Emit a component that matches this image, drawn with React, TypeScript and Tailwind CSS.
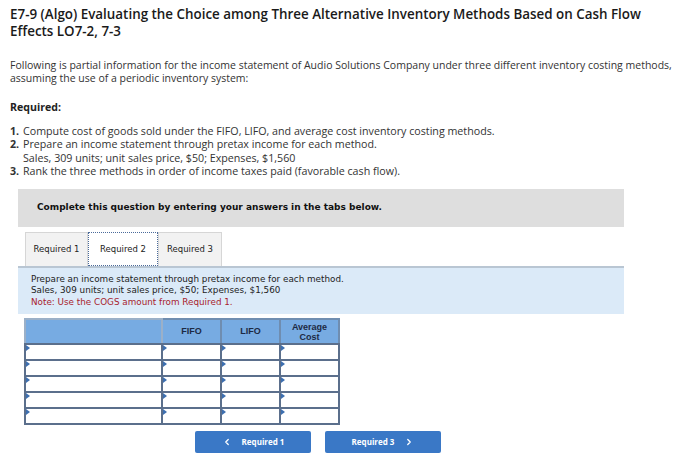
import React from 'react';
import { ChevronLeft, ChevronRight } from 'lucide-react';

const sans = { fontFamily: '"Open Sans", "Lato", sans-serif' };

const rows = [0, 1, 2, 3, 4];

const Cell: React.FC<{ className?: string }> = ({ className }) => (
    <td className={`relative border-2 border-[#5b6f8c] bg-white p-0 h-[16px] ${className ?? ''}`}>
        <span className="absolute left-0 top-0 w-0 h-0 border-t-[3px] border-b-[3px] border-l-[4px] border-t-transparent border-b-transparent border-l-[#3d6fb0]" />
    </td>
);

export default function App() {
    return (
        <div className="w-[700px] h-[460px] bg-white text-[#222] overflow-hidden" style={sans}>
            {/* Heading */}
            <div className="px-[10px] pt-[6px]">
                <h1 className="w-[650px] text-[13.4px] leading-[17px] font-semibold text-[#1a1a1a]">
                    E7-9 (Algo) Evaluating the Choice among Three Alternative Inventory Methods Based on Cash Flow Effects LO7-2, 7-3
                </h1>
                <p className="mt-[19px] text-[10.5px] leading-[13px] text-[#333]">
                    Following is partial information for the income statement of Audio Solutions Company under three different inventory costing methods, assuming the use of a periodic inventory system:
                </p>
                <div className="mt-[15px] text-[10.6px] font-bold text-[#222]">Required:</div>
                <ol className="mt-[9px] text-[10.7px] leading-[13.5px] text-[#333]">
                    <li className="flex"><span className="w-[13px] font-bold">1.</span><span>Compute cost of goods sold under the FIFO, LIFO, and average cost inventory costing methods.</span></li>
                    <li className="flex"><span className="w-[13px] font-bold">2.</span><span>Prepare an income statement through pretax income for each method.<br />Sales, 309 units; unit sales price, $50; Expenses, $1,560</span></li>
                    <li className="flex"><span className="w-[13px] font-bold">3.</span><span>Rank the three methods in order of income taxes paid (favorable cash flow).</span></li>
                </ol>
            </div>

            {/* Question box */}
            <div className="ml-[18px] w-[606px] mt-[10px]" style={{ fontFamily: '"DejaVu Sans", Verdana, sans-serif' }}>
                <div className="bg-[#dedede] h-[38px] flex items-center pl-[19px] text-[9px] font-bold text-[#111]">
                    Complete this question by entering your answers in the tabs below.
                </div>

                <div className="flex pl-[7px] mt-[5px] text-[8.5px] text-[#222]">
                    <div className="w-[63px] h-[34px] flex items-center justify-center bg-[#f2f2f2] border border-[#d6d6d6] border-b-0">Required 1</div>
                    <div className="w-[70px] h-[34px] flex items-center justify-center bg-white border border-dotted border-[#4a6a9a]">Required 2</div>
                    <div className="w-[64px] h-[34px] flex items-center justify-center bg-[#f2f2f2] border border-[#d6d6d6] border-b-0">Required 3</div>
                </div>

                <div className="bg-[#dbeaf8] border-t-2 border-[#b9c6d3] pl-[13px] pt-[6px] pb-[6px] text-[8.8px] leading-[11.5px] text-[#222]">
                    <div>Prepare an income statement through pretax income for each method.</div>
                    <div>Sales, 309 units; unit sales price, $50; Expenses, $1,560</div>
                    <div className="text-[#a8232e]">Note: Use the COGS amount from Required 1.</div>
                </div>
            </div>

            {/* Table */}
            <table className="ml-[24px] mt-[4px] border-collapse text-[9px] font-bold text-[#1d2a44]" style={{ fontFamily: '"Liberation Sans", Arial, sans-serif' }}>
                <thead>
                    <tr className="bg-[#77abe2] h-[25px]">
                        <th className="w-[137px] border-2 border-[#9bb0c8] border-b-[#5b6f8c]" />
                        <th className="w-[59px] border-2 border-[#6f8db0] border-b-[#5b6f8c] font-bold">FIFO</th>
                        <th className="w-[59px] border-2 border-[#6f8db0] border-b-[#5b6f8c] font-bold">LIFO</th>
                        <th className="w-[59px] border-2 border-[#6f8db0] border-b-[#5b6f8c] font-bold leading-[10px]">Average<br />Cost</th>
                    </tr>
                </thead>
                <tbody>
                    {rows.map((r) => (
                        <tr key={r}>
                            <Cell />
                            <Cell />
                            <Cell />
                            <Cell />
                        </tr>
                    ))}
                </tbody>
            </table>

            {/* Nav buttons */}
            <div className="flex gap-[14px] ml-[195px] mt-[6px]" style={sans}>
                <button className="w-[116px] h-[22px] rounded-[2px] bg-[#3a78c6] text-white text-[8px] font-bold flex items-center justify-center gap-[10px]">
                    <ChevronLeft className="w-[10px] h-[10px]" strokeWidth={3} />
                    Required 1
                </button>
                <button className="w-[116px] h-[22px] rounded-[2px] bg-[#3a78c6] text-white text-[8px] font-bold flex items-center justify-center gap-[10px]">
                    Required 3
                    <ChevronRight className="w-[10px] h-[10px]" strokeWidth={3} />
                </button>
            </div>
        </div>
    );
}
